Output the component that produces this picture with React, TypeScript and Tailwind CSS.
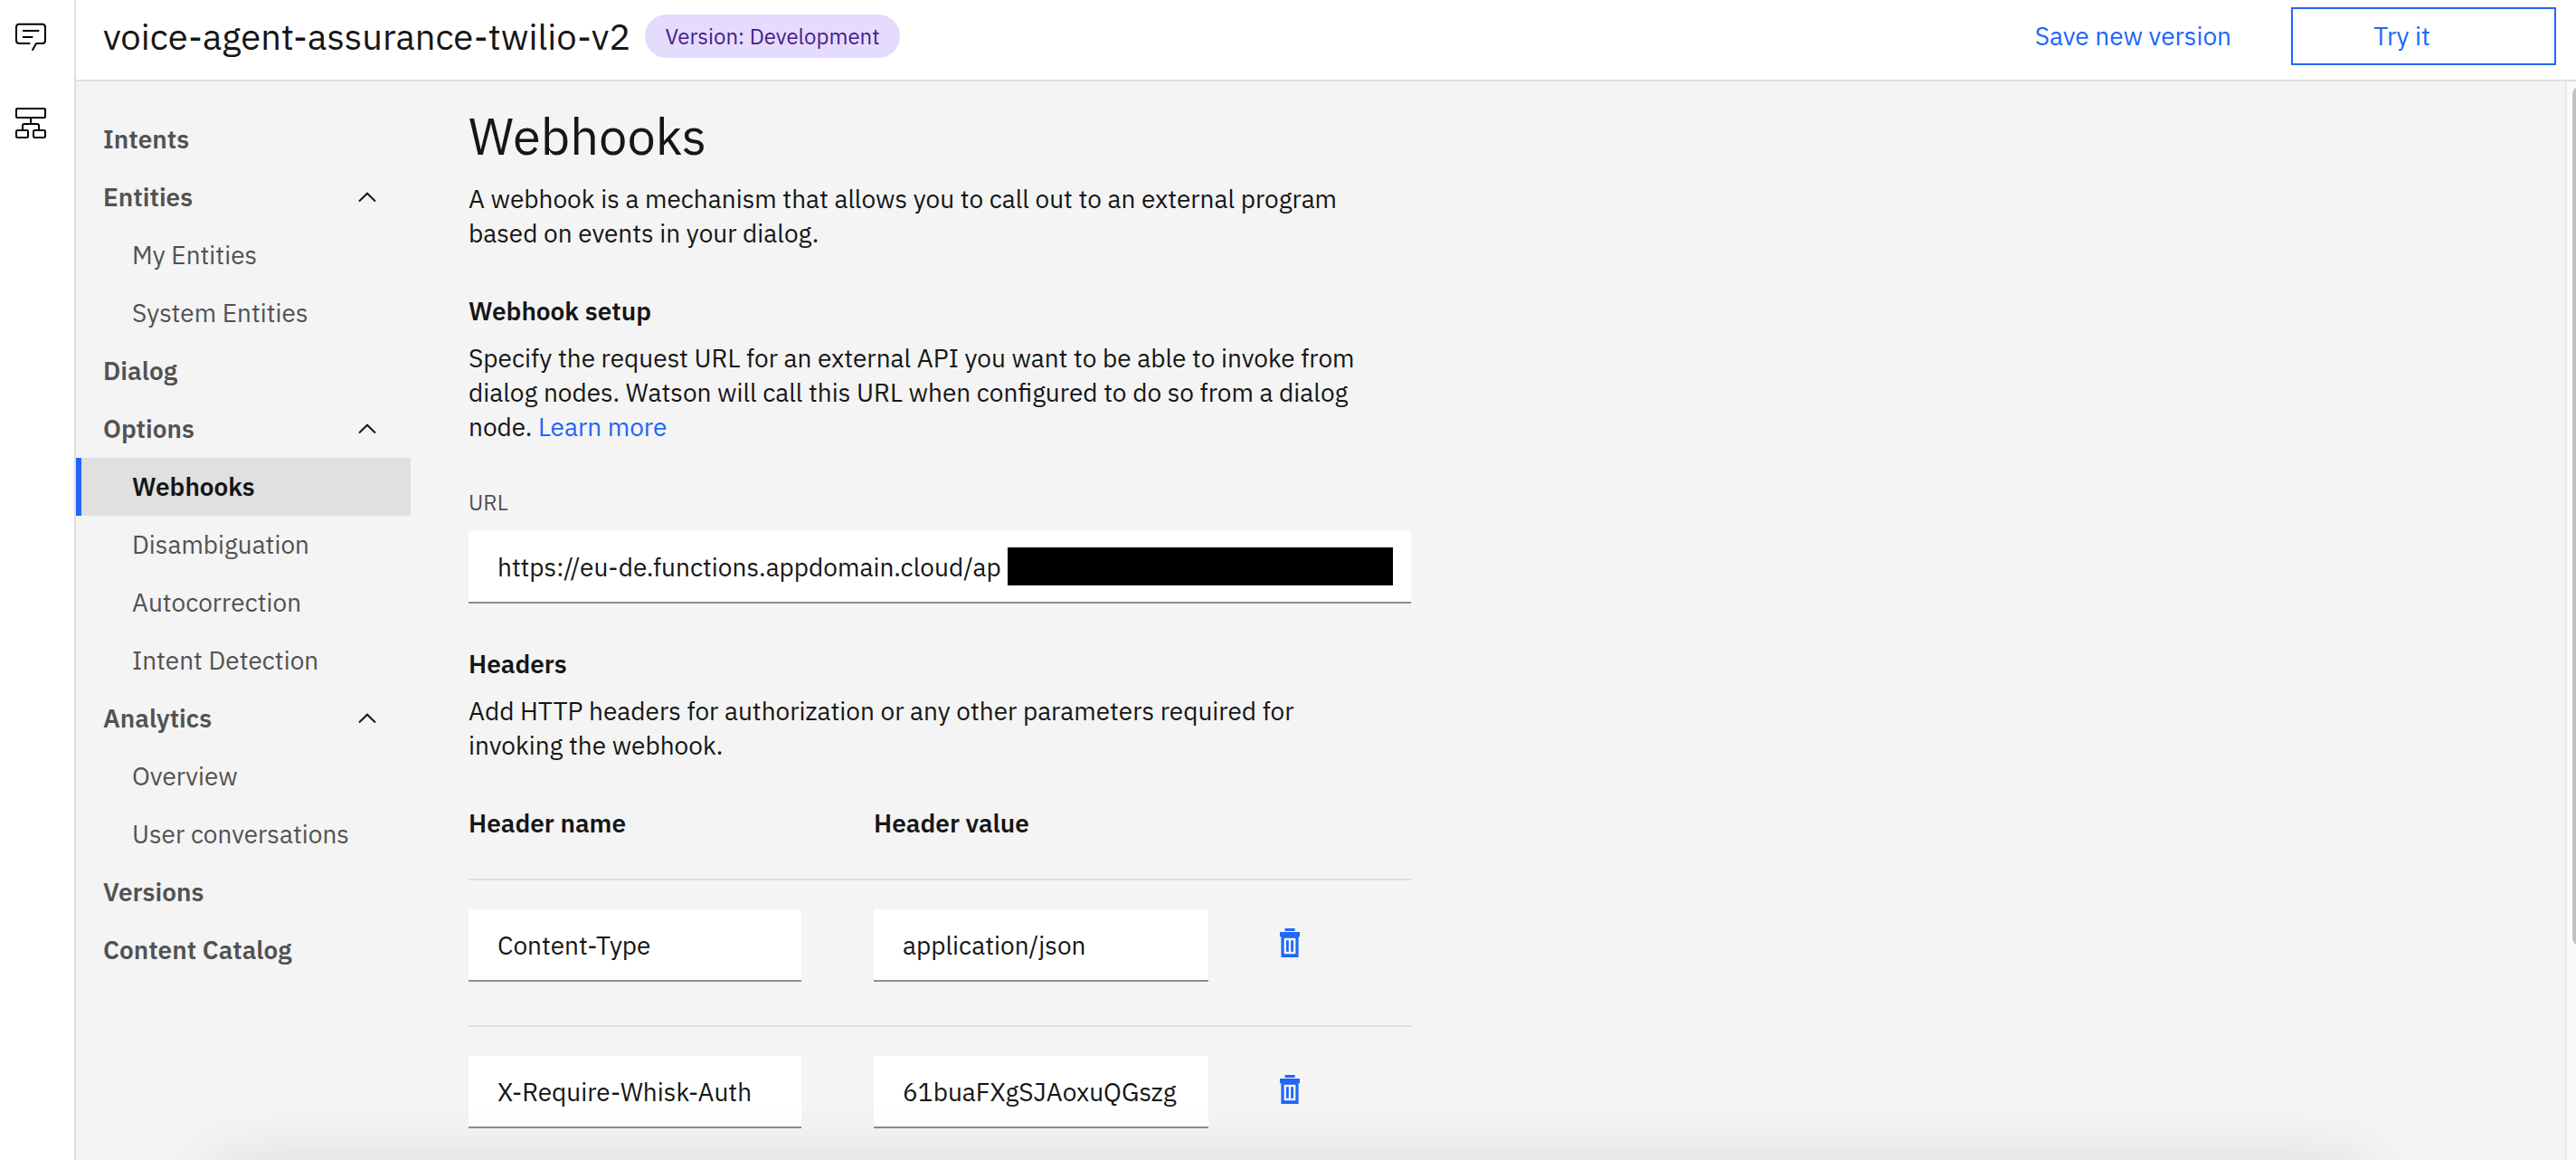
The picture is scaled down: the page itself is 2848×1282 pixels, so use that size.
import React, { useState } from "react";

type NavItem = { label: string; children?: string[] };

const NAV: NavItem[] = [
  { label: "Intents" },
  { label: "Entities", children: ["My Entities", "System Entities"] },
  { label: "Dialog" },
  { label: "Options", children: ["Webhooks", "Disambiguation", "Autocorrection", "Intent Detection"] },
  { label: "Analytics", children: ["Overview", "User conversations"] },
  { label: "Versions" },
  { label: "Content Catalog" },
];

const HEADERS = [
  { name: "Content-Type", value: "application/json" },
  { name: "X-Require-Whisk-Auth", value: "61buaFXgSJAoxuQGszg" },
];

function ChatIcon() {
  return (
    <svg viewBox="0 0 102 96" className="h-8 w-[34px]" fill="none" stroke="black" strokeWidth="6" strokeLinejoin="round" aria-hidden="true">
      <path d="M49 69H13q-10 0-10-10V15Q3 5 13 5h76q10 0 10 10v44q0 10-10 10H69L56 92M24 27h55M24 48h34" />
    </svg>
  );
}

function FlowIcon() {
  return (
    <svg viewBox="0 0 102 102" className="size-[34px]" fill="none" stroke="black" strokeWidth="6" strokeLinejoin="round" aria-hidden="true">
      <rect x="3" y="3" width="96" height="30" rx="3" />
      <rect x="3" y="75" width="39" height="24" rx="4" />
      <rect x="60" y="75" width="39" height="24" rx="4" />
      <path d="M51 33v21M24 75V60q0-6 6-6h42q6 0 6 6v15" />
    </svg>
  );
}

function ChevronUp() {
  return (
    <svg viewBox="0 0 20 12" className="h-3 w-5" fill="none" stroke="#161616" strokeWidth="2" aria-hidden="true">
      <path d="M1 10.5 10 1.7l9 8.8" />
    </svg>
  );
}

function TrashIcon() {
  return (
    <svg viewBox="0 0 22 32" className="h-8 w-[22px]" fill="#2066f8" aria-hidden="true">
      <rect x="5.6" y="0" width="11" height="3" />
      <path fillRule="evenodd" d="M0 4h22v5.2h-1.4V32H1.4V9.2H0zM4.6 10.7v17.5h12.8V10.7z" />
      <rect x="7" y="13.2" width="2.8" height="12.6" />
      <rect x="12.2" y="13.2" width="2.8" height="12.6" />
    </svg>
  );
}

function Sidebar() {
  return (
    <nav aria-label="Skill" className="w-[370px] shrink-0 pt-8 text-[28px] leading-9 text-[#525252]">
      <ul>
        {NAV.map((item) => (
          <li key={item.label}>
            {item.children ? (
              <button type="button" aria-expanded="true" className="flex h-16 w-full items-center justify-between pr-[38px] pl-[30px] font-semibold">
                {item.label}
                <ChevronUp />
              </button>
            ) : (
              <a href="#" className="flex h-16 items-center pl-[30px] font-semibold">
                {item.label}
              </a>
            )}
            {item.children && (
              <ul>
                {item.children.map((child) => (
                  <li key={child}>
                    {child === "Webhooks" ? (
                      <a href="#" aria-current="page" className="flex h-16 items-center border-l-6 border-[#2066f8] bg-[#e0e0e0] pl-14 font-semibold text-[#161616]">
                        {child}
                      </a>
                    ) : (
                      <a href="#" className="flex h-16 items-center pl-[62px]">
                        {child}
                      </a>
                    )}
                  </li>
                ))}
              </ul>
            )}
          </li>
        ))}
      </ul>
    </nav>
  );
}

function Field({ id, label, initial }: { id?: string; label?: string; initial: string }) {
  const [value, setValue] = useState(initial);
  return (
    <input
      id={id}
      aria-label={label}
      type="text"
      value={value}
      onChange={(e) => setValue(e.target.value)}
      className="block h-20 w-full border-b-2 border-[#8d8d8d] bg-white px-8 text-[28px] text-[#161616] outline-none"
    />
  );
}

function WebhookForm() {
  return (
    <main className="min-w-0 flex-1 pt-8 pl-16">
      <div className="max-w-[1042px] text-[28px] leading-[38px]">
        <h1 className="text-[56px] leading-14">Webhooks</h1>
        <p className="mt-[23px]">
          A webhook is a mechanism that allows you to call out to an external program based on events in your dialog.
        </p>

        <h2 className="mt-12 font-semibold">Webhook setup</h2>
        <p className="mt-[14px] max-w-[1030px]">
          Specify the request URL for an external API you want to be able to invoke from dialog nodes. Watson will call
          this URL when configured to do so from a dialog node.{" "}
          <a href="#" className="text-[#2066f8]">
            Learn more
          </a>
        </p>

        <label htmlFor="webhook-url" className="mt-12 block text-2xl text-[#525252]">
          URL
        </label>
        <div className="relative mt-4">
          <Field id="webhook-url" initial="https://eu-de.functions.appdomain.cloud/ap" />
          <div className="absolute top-[18px] right-5 h-[42px] w-[426px] bg-black" />
        </div>

        <h2 className="mt-12 font-semibold">Headers</h2>
        <p className="mt-[14px] max-w-[980px]">
          Add HTTP headers for authorization or any other parameters required for invoking the webhook.
        </p>

        <table className="mt-12 w-full table-fixed text-left">
          <thead>
            <tr>
              <th scope="col" className="w-[43%] pb-[42px] font-semibold">Header name</th>
              <th scope="col" className="w-[36%] pb-[42px] font-semibold">Header value</th>
              <th className="w-[21%]" aria-label="Actions" />
            </tr>
          </thead>
          <tbody>
            {HEADERS.map((h) => (
              <tr key={h.name} className="border-t-2 border-[#e0e0e0]">
                <td className="pt-8 pr-20 pb-12">
                  <Field label="Header name" initial={h.name} />
                </td>
                <td className="pt-8 pr-[5px] pb-12">
                  <Field label="Header value" initial={h.value} />
                </td>
                <td className="pt-8 pb-12 pl-[61px]">
                  <button type="button" aria-label={`Delete ${h.name}`} className="flex h-20 w-12 items-center justify-center pb-1.5">
                    <TrashIcon />
                  </button>
                </td>
              </tr>
            ))}
          </tbody>
        </table>
      </div>
    </main>
  );
}

export default function App() {
  return (
    <div className="relative flex h-screen overflow-hidden bg-white text-[#161616] [font-family:'IBM_Plex_Sans',Roboto,'Liberation_Sans',sans-serif]">
      <aside className="flex w-[84px] shrink-0 flex-col border-r-2 border-[#e0e0e0] pt-[25px]">
        <button type="button" aria-label="Assistants" className="ml-[17px] self-start">
          <ChatIcon />
        </button>
        <button type="button" aria-label="Skills" className="mt-[62px] ml-[17px] self-start">
          <FlowIcon />
        </button>
      </aside>

      <div className="flex min-w-0 flex-1 flex-col">
        <header className="flex shrink-0 items-start border-b-2 border-[#e0e0e0] pt-2 pr-[22px] pb-4 pl-[30px]">
          <div className="flex h-16 items-center gap-4">
            <span className="text-[40px] leading-[48px]">voice-agent-assurance-twilio-v2</span>
            <span className="flex h-12 items-center rounded-full bg-[#e5dbfd] px-[22px] text-2xl text-[#491d8b]">
              Version: Development
            </span>
          </div>
          <div className="ml-auto flex items-center text-[28px] text-[#2066f8]">
            <button type="button" className="h-16 px-[66px]">
              Save new version
            </button>
            <button type="button" className="h-16 w-[293px] border-2 border-[#2066f8] pr-12">
              Try it
            </button>
          </div>
        </header>

        <div className="flex min-h-0 flex-1 overflow-hidden bg-[#f4f4f4]">
          <Sidebar />
          <WebhookForm />
          <div className="w-3 shrink-0 overflow-hidden border-l-2 border-[#e8e8e8] bg-[#fafafa] pt-[6px] pl-[6px]" aria-hidden="true">
            <div className="h-4/5 w-4 rounded-full bg-[#c1c1c1]" />
          </div>
        </div>
      </div>

      <div className="pointer-events-none absolute inset-x-[230px] top-full h-20 rounded-t-3xl shadow-[0_0_64px_0_rgba(0,0,0,0.1)]" />
    </div>
  );
}
